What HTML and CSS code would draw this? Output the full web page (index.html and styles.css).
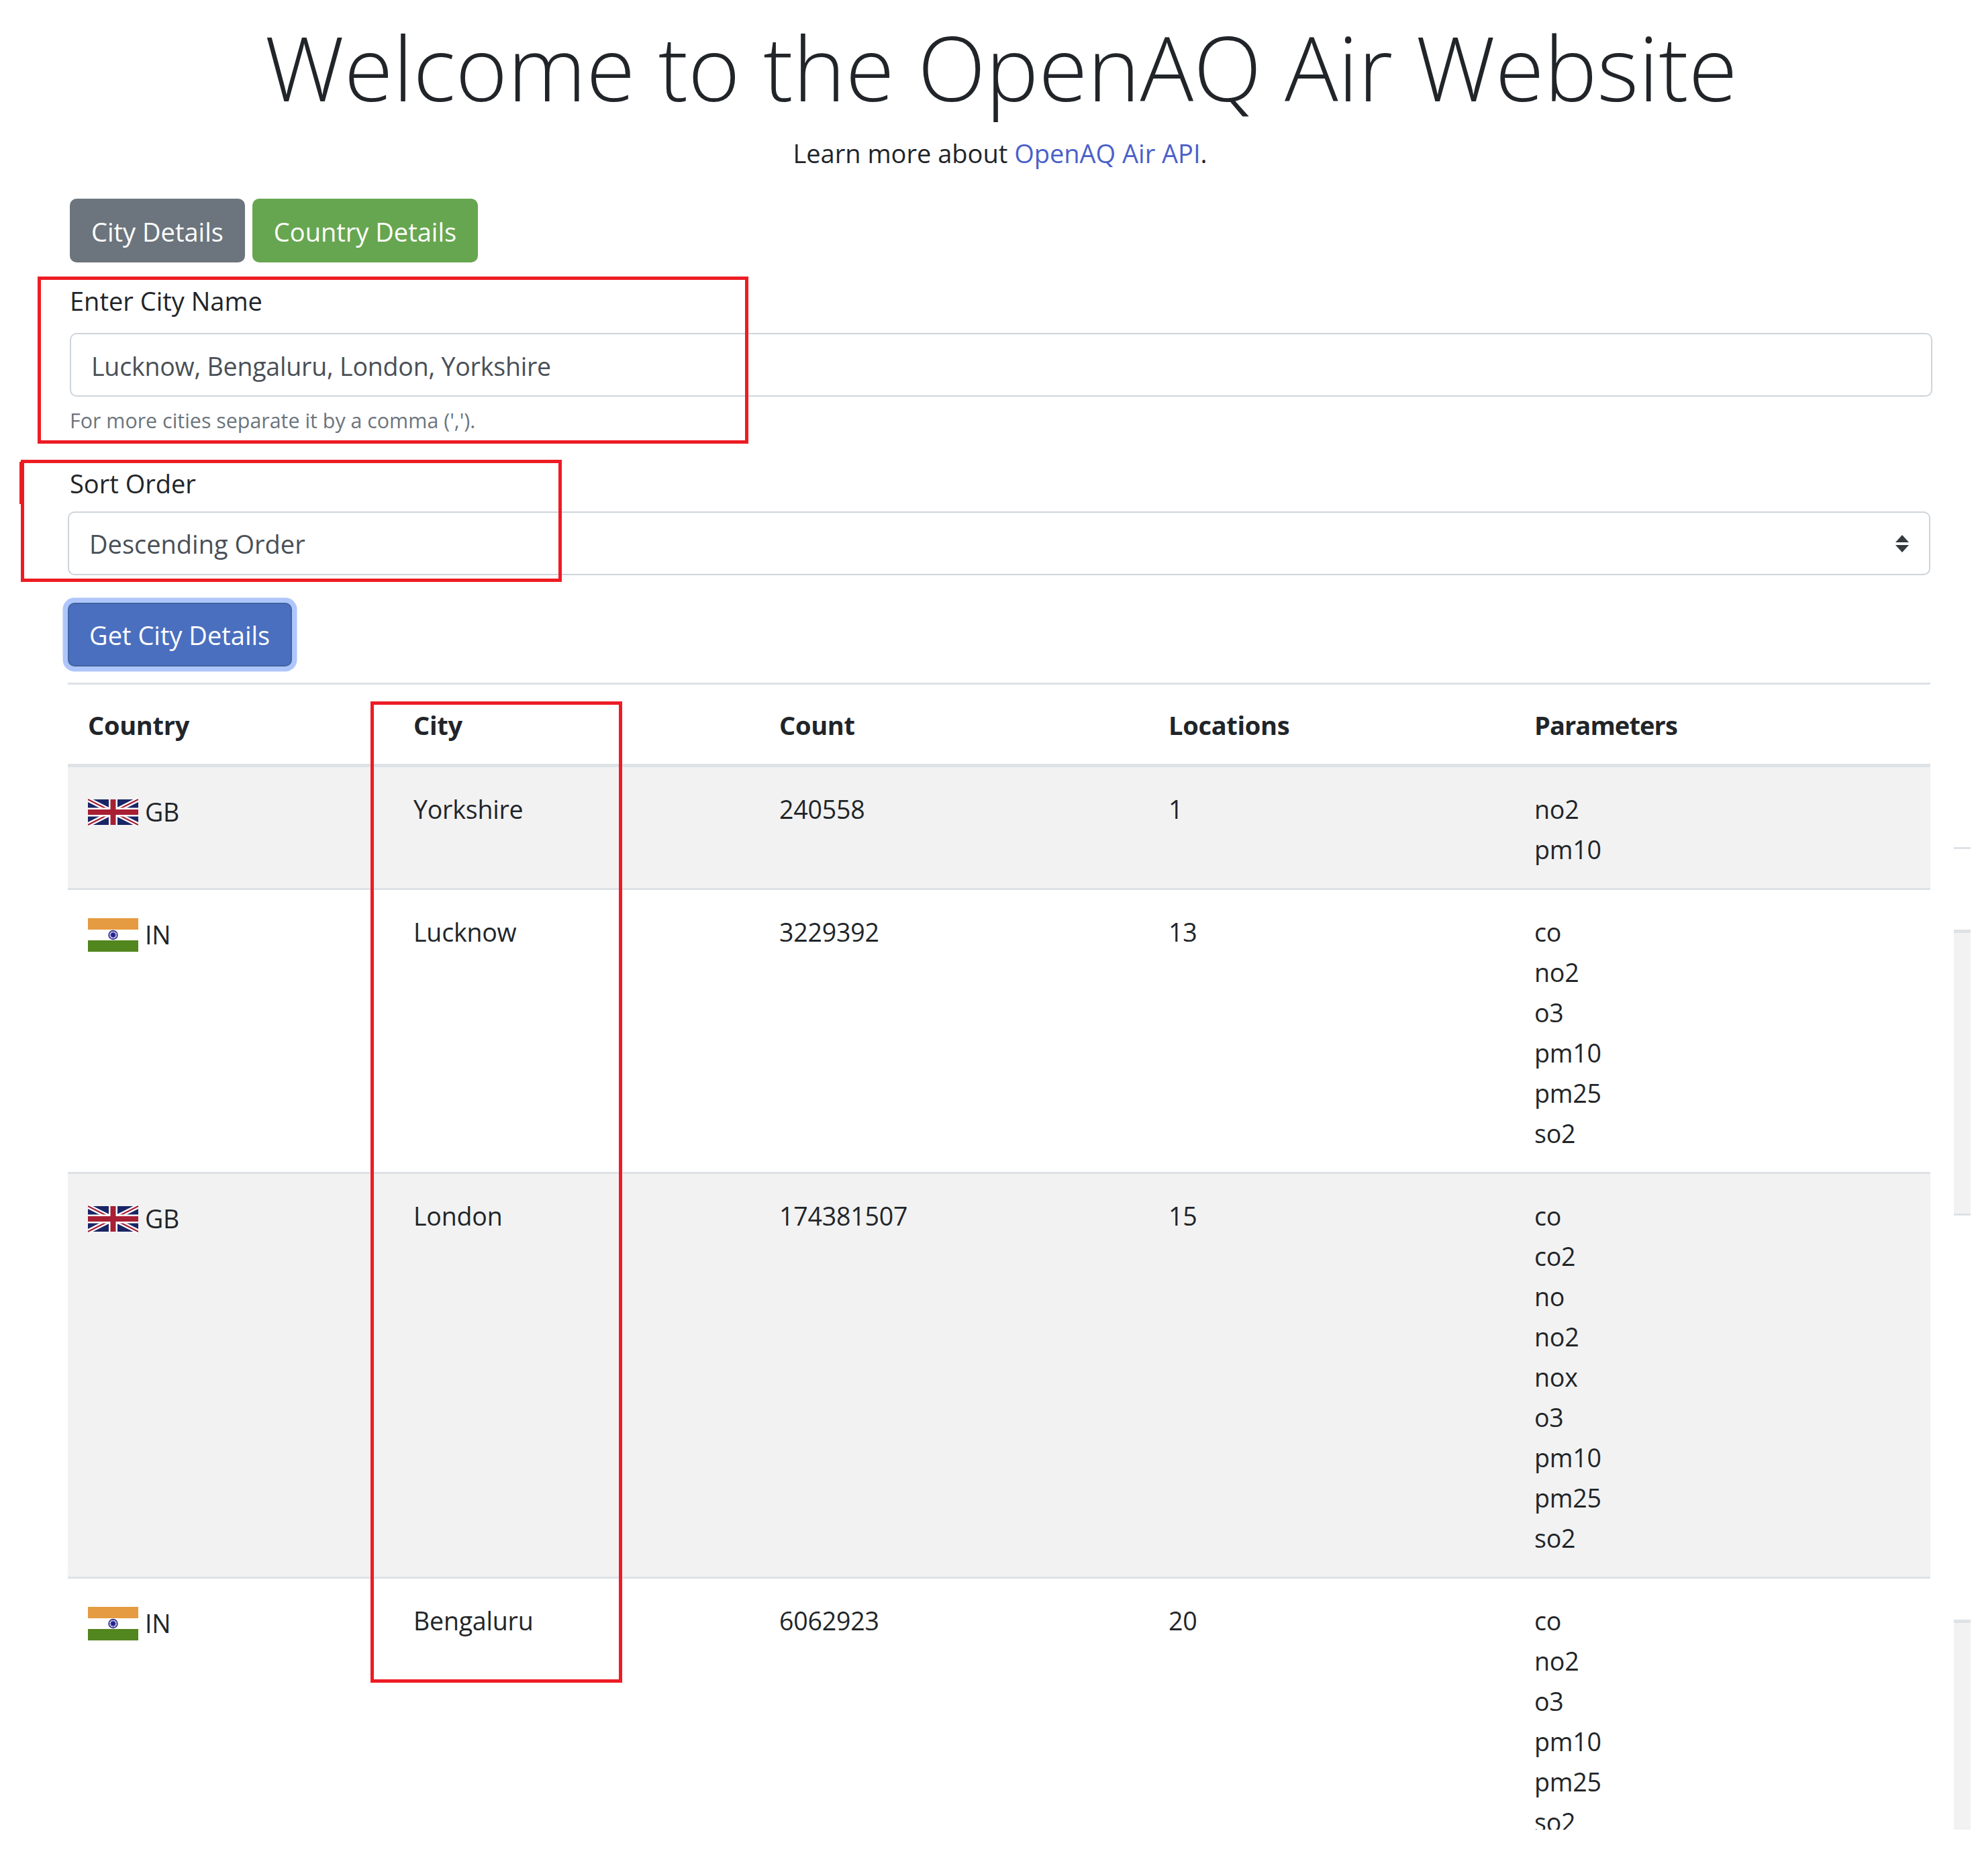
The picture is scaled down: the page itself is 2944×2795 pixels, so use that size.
FILE: index.html
```html
<!DOCTYPE html>
<html lang="en">
<head>
  <meta charset="UTF-8">
  <title>OpenAQ Air Website</title>
  <link rel="stylesheet" href="styles.css">
</head>
<body>

  <svg class="defs" width="0" height="0">
    <symbol id="flagGb" viewBox="0 0 75 50">
      <g transform="translate(0 6)">
        <rect width="75" height="38" fill="#1a2566"/>
        <path d="M0 0 L75 38 M75 0 L0 38" stroke="#fff" stroke-width="7"/>
        <path d="M0 0 L75 38 M75 0 L0 38" stroke="#a81f33" stroke-width="2.2"/>
        <path d="M37.5 0 V38 M0 19 H75" stroke="#fff" stroke-width="13"/>
        <path d="M37.5 0 V38 M0 19 H75" stroke="#a81f33" stroke-width="8"/>
      </g>
    </symbol>
    <symbol id="flagIn" viewBox="0 0 75 50">
      <rect width="75" height="17" fill="#e59b41"/>
      <rect y="17" width="75" height="16" fill="#fff"/>
      <rect y="33" width="75" height="17" fill="#52861e"/>
      <circle cx="37.5" cy="25" r="6.5" fill="#c9cbe8" stroke="#26228c" stroke-width="1.4"/>
      <circle cx="37.5" cy="25" r="3.4" fill="#26228c"/>
      <path d="M37.5 19 V31 M31.5 25 H43.5 M33.3 20.8 L41.7 29.2 M41.7 20.8 L33.3 29.2" stroke="#26228c" stroke-width=".7"/>
    </symbol>
  </svg>

  <div class="page">
    <main class="main">
      <h1 class="title">Welcome to the OpenAQ Air Website</h1>
      <p class="lead">Learn more about <a href="#">OpenAQ Air API</a>.</p>

      <div class="tabs">
        <button class="btn btn-gray" type="button">City Details</button>
        <button class="btn btn-green" type="button">Country Details</button>
      </div>

      <form class="form">
        <label class="city-label" for="city">Enter City Name</label>
        <input class="field" type="text" id="city" placeholder="Lucknow, Bengaluru, London, Yorkshire">
        <small class="help">For more cities separate it by a comma (',').</small>

        <label class="sort-label" for="sort">Sort Order</label>
        <select class="field select" id="sort">
          <option>Descending Order</option>
        </select>

        <button class="btn btn-blue" type="button">Get City Details</button>
      </form>

      <table class="results">
        <thead>
          <tr>
            <th class="col-country">Country</th>
            <th class="col-city">City</th>
            <th class="col-count">Count</th>
            <th class="col-locations">Locations</th>
            <th class="col-params">Parameters</th>
          </tr>
        </thead>
        <tbody>
          <tr>
            <td><div class="country"><svg class="flag"><use href="#flagGb"/></svg>GB</div></td>
            <td>Yorkshire</td>
            <td>240558</td>
            <td>1</td>
            <td>no2<br>pm10</td>
          </tr>
          <tr>
            <td><div class="country"><svg class="flag"><use href="#flagIn"/></svg>IN</div></td>
            <td>Lucknow</td>
            <td>3229392</td>
            <td>13</td>
            <td>co<br>no2<br>o3<br>pm10<br>pm25<br>so2</td>
          </tr>
          <tr>
            <td><div class="country"><svg class="flag"><use href="#flagGb"/></svg>GB</div></td>
            <td>London</td>
            <td>174381507</td>
            <td>15</td>
            <td>co<br>co2<br>no<br>no2<br>nox<br>o3<br>pm10<br>pm25<br>so2</td>
          </tr>
          <tr>
            <td><div class="country"><svg class="flag"><use href="#flagIn"/></svg>IN</div></td>
            <td>Bengaluru</td>
            <td>6062923</td>
            <td>20</td>
            <td>co<br>no2<br>o3<br>pm10<br>pm25<br>so2</td>
          </tr>
        </tbody>
      </table>
    </main>

    <div class="ghost">
      <div class="ghost-line"></div>
      <div class="ghost-row"></div>
      <div class="ghost-row ghost-last"></div>
    </div>

    <div class="mark mark-city"></div>
    <div class="mark mark-sort"></div>
    <div class="mark-notch"></div>
    <div class="mark mark-column"></div>
  </div>

</body>
</html>
```

FILE: styles.css
```css
body {
  margin: 0;
  background: #fff;
  color: #212529;
  font-family: "Open Sans", "Noto Sans", sans-serif;
  font-size: 38px;
  line-height: 60px;
}

.defs {
  display: block;
  height: 0;
}

.page {
  position: relative;
  display: flex;
  height: 2726px;
  overflow: hidden;
}

.main {
  width: 2778px;
  margin-left: 101px;
  flex: none;
}

.title {
  margin: 0;
  padding: 16px 0 0 3px;
  font-size: 132.6px;
  font-weight: 300;
  line-height: 168px;
  text-align: center;
}

.lead {
  margin: 14px 0 0;
  text-align: center;
}

.lead a {
  color: #4a60c9;
  text-decoration: none;
}

.tabs {
  display: flex;
  gap: 11px;
  margin: 38px 0 0 3px;
}

.btn {
  height: 95px;
  padding: 2px 30px 0;
  border: 2.5px solid transparent;
  border-radius: 10px;
  color: #fff;
  font: inherit;
}

.btn-gray {
  background: #6c757d;
}

.btn-green {
  background: #67a650;
}

.btn-blue {
  display: block;
  margin-top: 41px;
  padding: 0 31px 0 30px;
  background: #4a6fbf;
  border-color: #41649f;
  box-shadow: 0 0 0 7.5px #aec6fb;
}

.form {
  display: block;
}

.city-label,
.sort-label {
  display: block;
  margin-left: 3px;
}

.city-label {
  margin-top: 27px;
}

.sort-label {
  margin-top: 33px;
}

.field {
  display: block;
  box-sizing: border-box;
  width: 2775px;
  height: 95px;
  padding: 0 30px;
  background: #fff;
  border: 2.5px solid #ced4da;
  border-radius: 10px;
  color: #495057;
  font: inherit;
}

.field::placeholder {
  color: #495057;
  opacity: 1;
}

#city {
  margin: 18px 0 0 3px;
  padding-top: 3px;
  font-size: 37.5px;
  letter-spacing: -0.2px;
}

.help {
  display: block;
  margin: 6px 0 0 3px;
  color: #6c757d;
  font-size: 30.4px;
  line-height: 60px;
}

.select {
  margin-top: 12px;
  appearance: none;
  background-image: url("data:image/svg+xml,%3Csvg xmlns='http://www.w3.org/2000/svg' width='20' height='26'%3E%3Cpath d='M10 0 20 11H0zM10 26 0 15h20z' fill='%23343a40'/%3E%3C/svg%3E");
  background-repeat: no-repeat;
  background-position: right 30px center;
}

.results {
  width: 2775px;
  margin-top: 24px;
  border-collapse: collapse;
  table-layout: fixed;
}

.results th,
.results td {
  padding: 33px 30px 27px;
  border-top: 3px solid #dee2e6;
  text-align: left;
  vertical-align: top;
}

.results td {
  font-size: 37.5px;
  letter-spacing: -0.2px;
}

.results th {
  padding-top: 30px;
  padding-bottom: 28px;
  border-bottom: 5px solid #dee2e6;
  font-weight: 700;
  letter-spacing: -0.3px;
}

.results tbody tr:nth-child(odd) {
  background: #f2f2f2;
}

.col-country {
  width: 425px;
}

.col-city {
  width: 485px;
}

.col-count {
  width: 520px;
}

.col-locations {
  width: 485px;
}

.results .col-params {
  letter-spacing: -0.9px;
}

.country {
  display: flex;
  align-items: center;
  gap: 10px;
  height: 50px;
  margin-top: 9px;
}

.flag {
  width: 75px;
  height: 50px;
}

/* leftover piece of a second table at the right edge */
.ghost {
  width: 25px;
  margin-left: 32px;
  flex: none;
}

.ghost-line {
  height: 3px;
  margin-top: 1262px;
  background: #dee2e6;
}

.ghost-row {
  height: 418px;
  margin-top: 120px;
  background: #f2f2f2;
  border-top: 5px solid #dee2e6;
  border-bottom: 3px solid #dee2e6;
}

.ghost-last {
  height: 400px;
  margin-top: 602px;
  border-bottom: 0;
}

/* red annotation boxes drawn over the screenshot */
.mark {
  position: absolute;
  box-sizing: border-box;
  border: 5px solid #ed1c24;
}

.mark-city {
  left: 56px;
  top: 412px;
  width: 1059px;
  height: 249px;
}

.mark-sort {
  left: 31px;
  top: 685px;
  width: 806px;
  height: 182px;
}

.mark-notch {
  position: absolute;
  left: 29px;
  top: 688px;
  width: 3px;
  height: 63px;
  background: #ed1c24;
}

.mark-column {
  left: 552px;
  top: 1045px;
  width: 375px;
  height: 1462px;
}
```
